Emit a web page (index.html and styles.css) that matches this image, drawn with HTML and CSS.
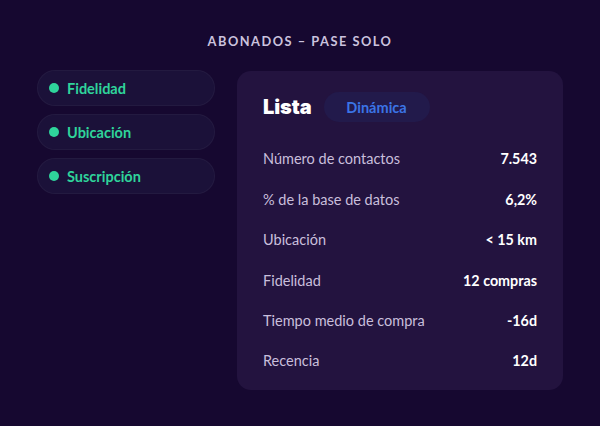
FILE: index.html
```html
<!DOCTYPE html>
<html lang="es">
<head>
<meta charset="utf-8">
<link rel="stylesheet" href="styles.css">
</head>
<body>
<div class="page">
  <h1 class="title">ABONADOS – PASE SOLO</h1>
  <div class="content">
    <ul class="filters">
      <li class="pill"><span class="dot"></span>Fidelidad</li>
      <li class="pill"><span class="dot"></span>Ubicación</li>
      <li class="pill"><span class="dot"></span>Suscripción</li>
    </ul>
    <section class="card">
      <header class="card-head">
        <h2 class="card-title">Lista</h2>
        <span class="badge">Dinámica</span>
      </header>
      <dl class="rows">
        <div class="row"><dt>Número de contactos</dt><dd>7.543</dd></div>
        <div class="row"><dt>% de la base de datos</dt><dd>6,2%</dd></div>
        <div class="row"><dt>Ubicación</dt><dd>&lt; 15 km</dd></div>
        <div class="row"><dt>Fidelidad</dt><dd>12 compras</dd></div>
        <div class="row"><dt>Tiempo medio de compra</dt><dd>-16d</dd></div>
        <div class="row"><dt>Recencia</dt><dd>12d</dd></div>
      </dl>
    </section>
  </div>
</div>
</body>
</html>
```
FILE: styles.css
```css
* { box-sizing: border-box; }
html, body {
  margin: 0;
  padding: 0;
  background: #160830;
  font-family: "Lato", "Noto Sans", sans-serif;
}
.page {
  width: 600px;
  height: 426px;
  padding: 33px 37px 0;
}
.title {
  margin: 0;
  text-align: center;
  font-size: 12.8px;
  line-height: 16px;
  font-weight: 700;
  letter-spacing: 1.5px;
  color: #cbc2de;
}
.content {
  display: flex;
  gap: 22px;
  margin-top: 21px;
  align-items: flex-start;
}
.filters {
  list-style: none;
  margin: 0;
  padding: 0;
  width: 178px;
  display: flex;
  flex-direction: column;
  gap: 8px;
}
.pill {
  height: 36px;
  border-radius: 18px;
  background: #1b1139;
  border: 1px solid rgba(255,255,255,0.04);
  display: flex;
  align-items: center;
  padding-left: 11px;
  gap: 8px;
  color: #2fd49b;
  font-weight: 700;
  font-size: 14.5px;
}
.dot {
  width: 10px;
  height: 10px;
  border-radius: 50%;
  background: #2fd49b;
}
.card {
  flex: 1;
  height: 319px;
  margin-top: 1px;
  background: #23133f;
  border-radius: 14px;
  padding: 21px 26px 8px;
}
.card-head {
  display: flex;
  align-items: center;
  gap: 12px;
  height: 30px;
}
.card-title {
  margin: 0;
  font-family: "Inter", "Lato", sans-serif;
  font-size: 20px;
  font-weight: 900;
  color: #ffffff;
  letter-spacing: -0.1px;
}
.badge {
  height: 30px;
  width: 106px;
  border-radius: 15px;
  background: #221a4b;
  color: #3b74e6;
  font-size: 14.5px;
  font-weight: 700;
  display: flex;
  align-items: center;
  justify-content: center;
}
.rows {
  margin: 16.75px 0 0;
}
.row {
  height: 40.4px;
  display: flex;
  align-items: center;
  justify-content: space-between;
}
.row dt {
  font-size: 14.5px;
  color: #c9bfdc;
}
.row dd {
  margin: 0;
  font-size: 14.3px;
  font-weight: 700;
  color: #ffffff;
}
```
